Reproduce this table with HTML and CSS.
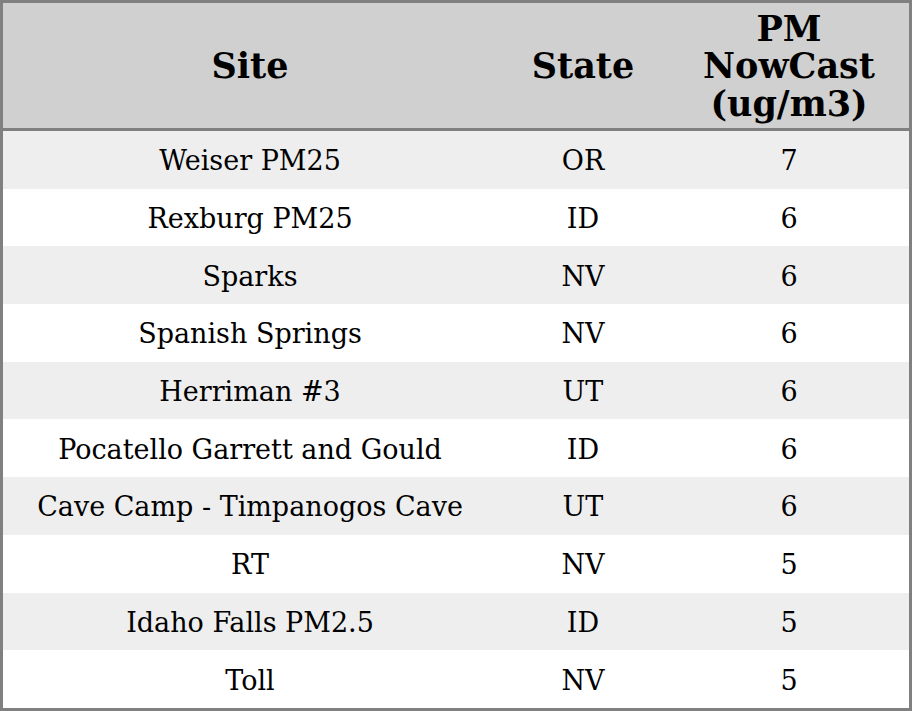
FILE: index.html
```html
<!DOCTYPE html>
<html>
<head>
<meta charset="utf-8">
<link rel="stylesheet" href="styles.css">
</head>
<body>
<table class="aq">
  <colgroup>
    <col class="c-site">
    <col class="c-state">
    <col class="c-pm">
  </colgroup>
  <thead>
    <tr class="head">
      <th>Site</th>
      <th>State</th>
      <th>PM NowCast (ug/m3)</th>
    </tr>
  </thead>
  <tbody>
    <tr><td>Weiser PM25</td><td>OR</td><td>7</td></tr>
    <tr><td>Rexburg PM25</td><td>ID</td><td>6</td></tr>
    <tr><td>Sparks</td><td>NV</td><td>6</td></tr>
    <tr><td>Spanish Springs</td><td>NV</td><td>6</td></tr>
    <tr><td>Herriman #3</td><td>UT</td><td>6</td></tr>
    <tr><td>Pocatello Garrett and Gould</td><td>ID</td><td>6</td></tr>
    <tr><td>Cave Camp - Timpanogos Cave</td><td>UT</td><td>6</td></tr>
    <tr><td>RT</td><td>NV</td><td>5</td></tr>
    <tr><td>Idaho Falls PM2.5</td><td>ID</td><td>5</td></tr>
    <tr><td>Toll</td><td>NV</td><td>5</td></tr>
  </tbody>
</table>
</body>
</html>
```
FILE: styles.css
```css
html, body {
  margin: 0;
  padding: 0;
  background: #ffffff;
}

.aq {
  width: 912px;
  height: 711px;
  table-layout: fixed;
  border-collapse: separate;
  border-spacing: 0;
  border: 3px solid #808080;
  font-family: "DejaVu Serif", serif;
  color: #000000;
}

.c-site { width: 494px; }
.c-state { width: 172px; }
.c-pm { width: 240px; }

.aq th {
  background: #d0d0d0;
  font-size: 35px;
  font-weight: bold;
  line-height: 37.5px;
  height: 128px;
  padding: 1px 6px 0;
  box-sizing: border-box;
  border-bottom: 3px solid #808080;
  text-align: center;
  vertical-align: middle;
}

.aq td {
  font-size: 27px;
  height: 57.7px;
  padding: 2px 4px 0;
  box-sizing: border-box;
  text-align: center;
  vertical-align: middle;
  white-space: nowrap;
}

.aq tbody tr:nth-child(odd) td {
  background: #eeeeee;
}
```
